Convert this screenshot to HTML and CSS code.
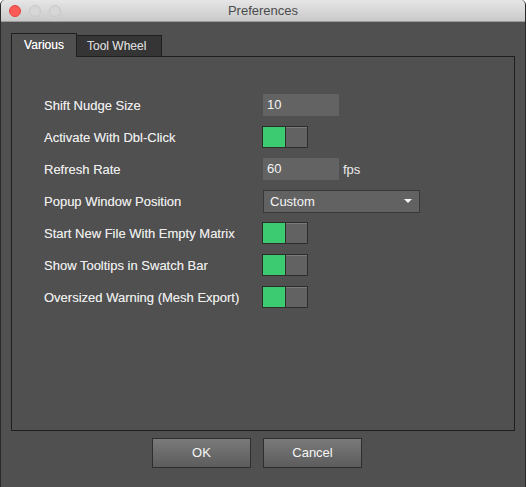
FILE: index.html
```html
<!DOCTYPE html>
<html>
<head>
<meta charset="utf-8">
<link rel="stylesheet" href="styles.css">
</head>
<body>
<div class="window">
  <div class="titlebar">
    <div class="lights">
      <span class="light red"></span>
      <span class="light gray"></span>
      <span class="light gray"></span>
    </div>
    <div class="title">Preferences</div>
  </div>
  <div class="content">
    <div class="tabs">
      <div class="tab active">Various</div>
      <div class="tab">Tool Wheel</div>
      <div class="tab-fill"></div>
    </div>
    <div class="panel">
      <div class="row">
        <div class="label">Shift Nudge Size</div>
        <div class="field">10</div>
      </div>
      <div class="row">
        <div class="label">Activate With Dbl-Click</div>
        <div class="toggle"><span class="on"></span><span class="off"></span></div>
      </div>
      <div class="row">
        <div class="label">Refresh Rate</div>
        <div class="field">60</div>
        <div class="unit">fps</div>
      </div>
      <div class="row">
        <div class="label">Popup Window Position</div>
        <div class="select">Custom<span class="arrow"></span></div>
      </div>
      <div class="row">
        <div class="label">Start New File With Empty Matrix</div>
        <div class="toggle"><span class="on"></span><span class="off"></span></div>
      </div>
      <div class="row">
        <div class="label">Show Tooltips in Swatch Bar</div>
        <div class="toggle"><span class="on"></span><span class="off"></span></div>
      </div>
      <div class="row">
        <div class="label">Oversized Warning (Mesh Export)</div>
        <div class="toggle"><span class="on"></span><span class="off"></span></div>
      </div>
    </div>
    <div class="buttons">
      <div class="btn">OK</div>
      <div class="btn">Cancel</div>
    </div>
  </div>
</div>
</body>
</html>
```
FILE: styles.css
```css
html, body {
  margin: 0;
  padding: 0;
  background: #ffffff;
}
body {
  font-family: "Liberation Sans", Arial, sans-serif;
  width: 526px;
  height: 487px;
  overflow: hidden;
}
.window {
  width: 526px;
  height: 487px;
  box-sizing: border-box;
  background: #505050;
  border-left: 1px solid #2a2a2a;
  border-right: 1px solid #2a2a2a;
  border-radius: 5px 5px 0 0;
  overflow: hidden;
}
.titlebar {
  height: 21px;
  border-bottom: 1px solid #9c9c9c;
  background: linear-gradient(#e6e6e6, #c9c9c9);
  display: flex;
  align-items: center;
  position: relative;
}
.lights {
  display: flex;
  gap: 8px;
  padding-left: 8px;
}
.light {
  width: 12px;
  height: 12px;
  border-radius: 50%;
  box-sizing: border-box;
}
.light.red {
  background: #fc5b57;
  border: 1px solid #e2463f;
}
.light.gray {
  background: #d6d6d6;
  border: 1px solid #c8c8c8;
}
.title {
  position: absolute;
  left: 0;
  right: 0;
  top: 0;
  line-height: 22px;
  text-align: center;
  font-size: 13px;
  color: #4b4b4b;
  pointer-events: none;
}
.content {
  padding: 10px 10px 0 10px;
}
.tabs {
  display: flex;
  align-items: flex-end;
  height: 25px;
}
.tab {
  font-size: 12px;
  box-sizing: border-box;
  width: 85px;
  height: 22px;
  line-height: 21px;
  padding-left: 10px;
  color: #d6d6d6;
  background: #353535;
  border: 1px solid #1f1f1f;
  border-left: none;
  text-shadow: 0 0 0.4px rgba(214, 214, 214, 0.6);
}
.tab.active {
  width: 66px;
  height: 24px;
  line-height: 23px;
  padding: 0;
  text-align: center;
  color: #ffffff;
  background: #505050;
  border: 1px solid #1f1f1f;
  border-bottom: none;
  text-shadow: 0 0 0.4px rgba(255, 255, 255, 0.7);
}
.tab-fill {
  flex: 1;
  border-bottom: 1px solid #1f1f1f;
}
.panel {
  height: 374px;
  box-sizing: border-box;
  border: 1px solid #1f1f1f;
  border-top: none;
  padding: 32px 0 0 32px;
}
.row {
  display: flex;
  align-items: center;
  height: 32px;
}
.label {
  width: 219px;
  font-size: 13px;
  color: #ececec;
  text-shadow: 0 0 0.4px rgba(236, 236, 236, 0.6);
}
.field {
  width: 76px;
  height: 22px;
  box-sizing: border-box;
  background: #636363;
  font-size: 13px;
  line-height: 22px;
  color: #f4f4f4;
  padding-left: 4px;
}
.unit {
  font-size: 13px;
  color: #ececec;
  margin-left: 4px;
}
.toggle {
  display: flex;
  width: 46px;
  height: 22px;
  box-sizing: border-box;
  border: 1px solid #2c2c2c;
  margin-left: -1px;
}
.toggle .on {
  width: 22px;
  background: #3dcb72;
  border-right: 1px solid #2c2c2c;
}
.toggle .off {
  flex: 1;
  background: #626262;
  border-top: 1px solid #7a7a7a;
}
.select {
  width: 157px;
  height: 23px;
  box-sizing: border-box;
  background: #626262;
  border: 1px solid #383838;
  font-size: 13px;
  line-height: 21px;
  color: #f4f4f4;
  padding-left: 6px;
  display: flex;
  align-items: center;
  justify-content: space-between;
  padding-right: 7px;
}
.arrow {
  width: 0;
  height: 0;
  border-left: 4px solid transparent;
  border-right: 4px solid transparent;
  border-top: 4px solid #f4f4f4;
}
.buttons {
  display: flex;
  justify-content: center;
  gap: 12px;
  margin-top: 7px;
  padding-right: 12px;
}
.btn {
  width: 99px;
  height: 30px;
  box-sizing: border-box;
  border: 1px solid #2e2e2e;
  background: linear-gradient(#7a7a7a, #5c5c5c);
  color: #f6f6f6;
  font-size: 13px;
  line-height: 28px;
  text-align: center;
}
```
